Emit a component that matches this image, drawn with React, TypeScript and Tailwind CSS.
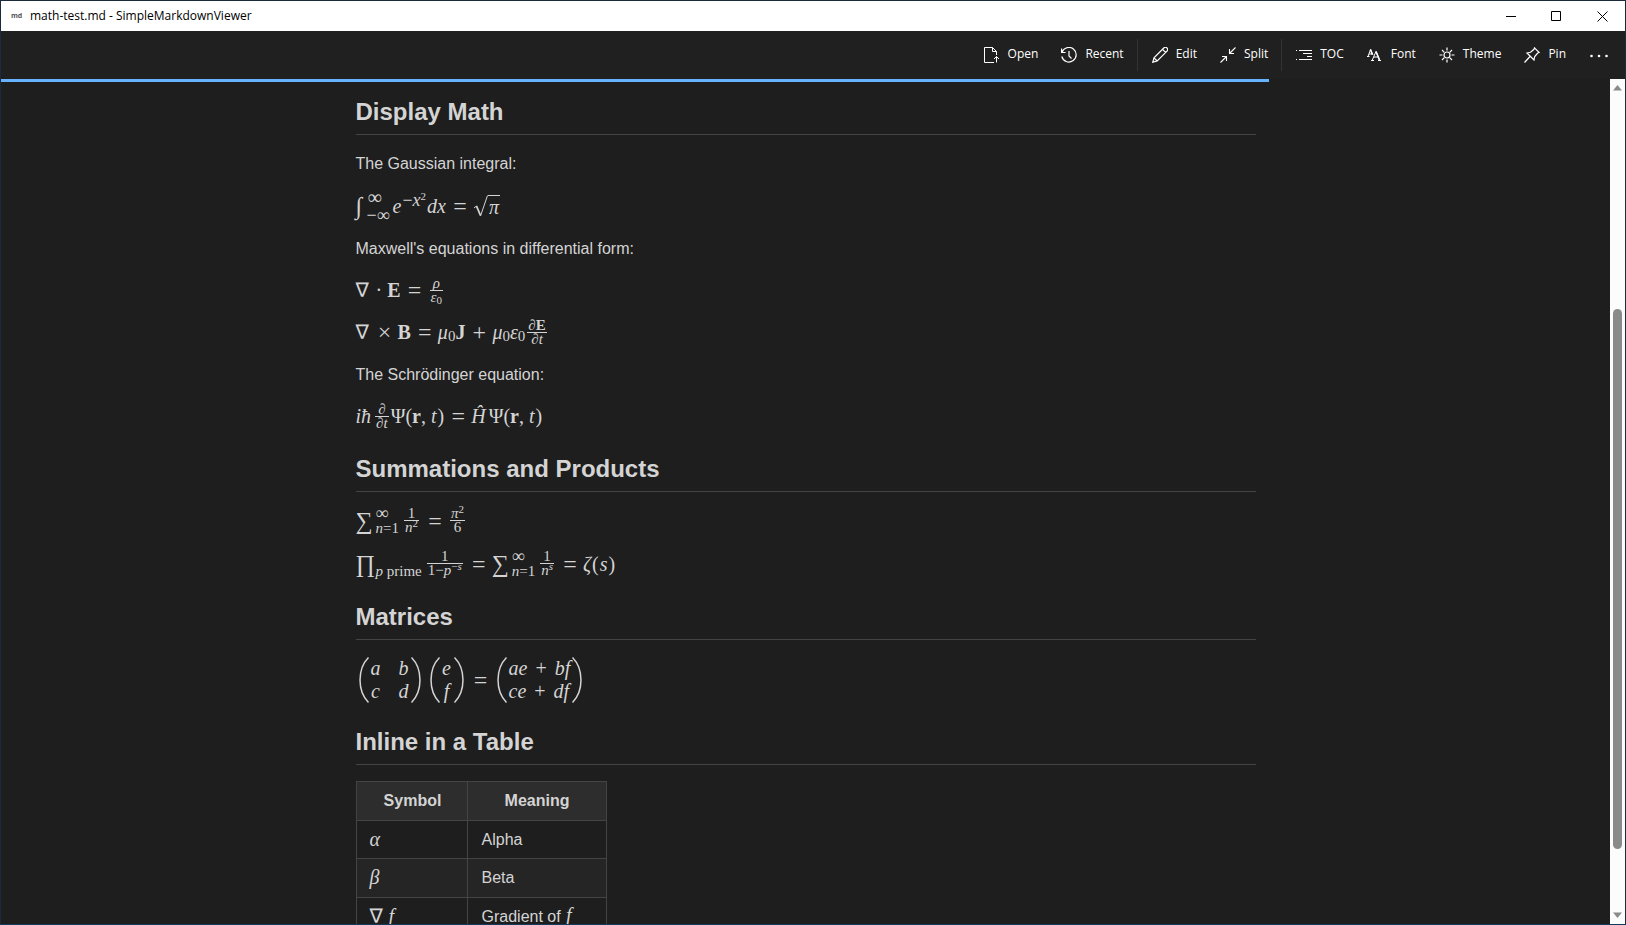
import type { ReactNode } from 'react'

const stroke = { fill: 'none', stroke: 'currentColor', strokeWidth: 1 }

function OpenIcon() {
  return (
    <svg className="size-4" viewBox="0 0 16 16" {...stroke}>
      <path d="M10 15.500H.5V.5h8l4 4V8M8.500.5v4h4M12.500 15.500V9.500M10 12l2.500-2.500L15 12" />
    </svg>
  )
}

function RecentIcon() {
  return (
    <svg className="size-4" viewBox="0 0 16 16" {...stroke} strokeWidth={1.2}>
      <path d="M.6 1.500v4h4M1 5.300A7.300 7.300 0 1 1 .8 9.500M8 4v5l2.500 2.500" />
    </svg>
  )
}

function EditIcon() {
  return (
    <svg className="size-4" viewBox="0 0 16 16" {...stroke} strokeWidth={1.2}>
      <path d="M.8 15.200 2 10.800 11.800 1a2 2 0 0 1 3.200 3.200L5.200 14ZM10.500 2.300l3.200 3.200M2 10.800 5.200 14" />
    </svg>
  )
}

function SplitIcon() {
  return (
    <svg className="size-4" viewBox="0 0 16 16" {...stroke} strokeWidth={1.1}>
      <path d="M15.500.5 9.500 6.500M9.500 2v4.500H14M.5 15.500l6-6M2 9.500h4.500V14" />
    </svg>
  )
}

function TocIcon() {
  return (
    <svg className="size-4" viewBox="0 0 16 16" {...stroke}>
      <path d="M0 3.500h1M3 3.500h13M7 6.500h9M11 9.500h5M0 12.500h1M3 12.500h13" />
    </svg>
  )
}

function FontIcon() {
  return (
    <svg className="size-4" viewBox="0 0 16 16" {...stroke}>
      <path d="M1 9.500 3.500 2.500 6 8M2 7h3M0 9.500h2.500M5.300 13 9 4.500 12.500 13M6.500 10h5M4 13.500h3M11 13.500h3" />
      <path d="m3.500 2.500 1.800 5M9 4.500l3.500 8.500" strokeWidth="1.600" />
    </svg>
  )
}

function ThemeIcon() {
  return (
    <svg className="size-4" viewBox="0 0 16 16" {...stroke} strokeWidth={1.2}>
      <circle cx="8" cy="8" r="3" />
      <path d="M8 .5v3M8 12.500v3M.5 8h3M12.500 8h3M3 3l2.300 2.300M10.700 10.700 13 13M3 13l2.300-2.300M10.700 5.300 13 3" />
    </svg>
  )
}

function PinIcon() {
  return (
    <svg className="size-4" viewBox="0 0 16 16" {...stroke} strokeWidth={1.2}>
      <path d="M10.500.8 15.200 5.500l-1.500.5-3 3.500-.7 3.500L3 6l3.500-.7L10 2.300ZM6 9.500.5 15.500" />
    </svg>
  )
}

const toolGroups = [
  [
    { label: 'Open', icon: <OpenIcon /> },
    { label: 'Recent', icon: <RecentIcon /> }
  ],
  [
    { label: 'Edit', icon: <EditIcon /> },
    { label: 'Split', icon: <SplitIcon /> }
  ],
  [
    { label: 'TOC', icon: <TocIcon /> },
    { label: 'Font', icon: <FontIcon /> },
    { label: 'Theme', icon: <ThemeIcon /> },
    { label: 'Pin', icon: <PinIcon /> }
  ]
]

function TitleBar() {
  return (
    <header className="flex h-[30px] shrink-0 items-center bg-white text-black">
      <span className="w-7 pl-[10px] text-[7px] font-bold text-[#555]">md</span>
      <h1 className="flex-1 pl-px text-xs">math-test.md - SimpleMarkdownViewer</h1>
      <button aria-label="Minimize" className="flex h-full w-[46px] items-center justify-center">
        <svg className="h-[11px] w-[11px]" viewBox="0 0 11 11" {...stroke}>
          <path d="M0 5.500h10" />
        </svg>
      </button>
      <button aria-label="Maximize" className="flex h-full w-[45px] items-center justify-center">
        <svg className="h-[11px] w-[11px]" viewBox="0 0 11 11" {...stroke}>
          <path d="M.5.5h9v9h-9z" />
        </svg>
      </button>
      <button aria-label="Close" className="flex h-full w-[46px] items-center justify-center">
        <svg className="h-[11px] w-[11px]" viewBox="0 0 11 11" {...stroke}>
          <path d="m.5.5 10 10M10.500.5l-10 10" />
        </svg>
      </button>
    </header>
  )
}

function Toolbar() {
  return (
    <nav className="flex h-12 shrink-0 items-center justify-end bg-[#202020] pr-1 text-xs text-white">
      {toolGroups.map((group, index) => (
        <div key={index} className="flex items-center">
          {index > 0 && <div className="mx-[2px] h-8 w-px bg-[#333]" />}
          {group.map((tool) => (
            <button key={tool.label} className="flex h-10 items-center gap-2 pr-[11px] pl-3">
              {tool.icon}
              <span className="pb-[2px]">{tool.label}</span>
            </button>
          ))}
        </div>
      ))}
      <button aria-label="More" className="flex h-10 w-11 items-center justify-center">
        <svg className="h-4 w-5" viewBox="0 0 20 16" fill="currentColor">
          <circle cx="2.500" cy="9" r="1.300" />
          <circle cx="10" cy="9" r="1.300" />
          <circle cx="17.500" cy="9" r="1.300" />
        </svg>
      </button>
    </nav>
  )
}

function Heading({ children }: { children: ReactNode }) {
  return (
    <h2 className="mt-6 mb-4 border-b border-[#444] pb-[7px] text-2xl/[30px] font-bold first:mt-0">
      {children}
    </h2>
  )
}

function Formula({ tall, children }: { tall?: boolean; children: ReactNode }) {
  return (
    <div
      className={`mb-4 flex items-center pb-[2px] font-['Liberation_Serif',serif] text-xl/[26px] whitespace-nowrap ${
        tall ? 'h-[27px]' : 'h-[26px]'
      }`}
    >
      {children}
    </div>
  )
}

// Infix operator or relation
function Op({ children }: { children: ReactNode }) {
  return (
    <span className="mr-[5px] ml-[6px] w-4 text-center text-2xl/[26px]">{children}</span>
  )
}

function Nabla() {
  return <span className="w-[15px] font-['DejaVu_Sans',sans-serif]">∇</span>
}

function Sub({ children }: { children: ReactNode }) {
  return <span className="pt-2 text-[15px]/[18px]">{children}</span>
}

function Frac({ top, bottom }: { top: ReactNode; bottom: ReactNode }) {
  return (
    <span className="mx-[2px] flex flex-col text-center text-[15px]/[13px]">
      <span className="border-b border-current px-px">{top}</span>
      <span className="px-px">{bottom}</span>
    </span>
  )
}

function Sup({ children }: { children: ReactNode }) {
  return <sup className="text-[11px] leading-0">{children}</sup>
}

// Large operator with limits stacked at its side
function BigOp({ sign, upper, lower }: { sign: string; upper?: ReactNode; lower: ReactNode }) {
  return (
    <span className="mr-[3px] flex items-center">
      <span className="w-5 text-2xl/[26px]">{sign}</span>
      <span className="flex flex-col">
        <span className="h-[14px] text-lg/[13px]">{upper}</span>
        <span className="text-[15px]/[14px]">{lower}</span>
      </span>
    </span>
  )
}

function Matrix({ rows }: { rows: ReactNode[][] }) {
  return (
    <span className="flex items-center">
      <svg className="h-[46px] w-[11px]" viewBox="0 0 11 46" {...stroke}>
        <path d="M10.500.5C-.8 12-.8 34 10.500 45.500" strokeWidth="1.500" />
      </svg>
      <span className="flex flex-col px-[2px] leading-[23px] italic">
        {rows.map((row, rowIndex) => (
          <span key={rowIndex} className="flex justify-between gap-[18px]">
            {row.map((cell, cellIndex) => (
              <span key={cellIndex} className="min-w-[10px] text-center">{cell}</span>
            ))}
          </span>
        ))}
      </span>
      <svg className="h-[46px] w-[11px]" viewBox="0 0 11 46" {...stroke}>
        <path d="M.5.5C11.800 12 11.800 34 .5 45.500" strokeWidth="1.500" />
      </svg>
    </span>
  )
}

const plus = <span className="mx-2 not-italic">+</span>

const symbols = [
  { symbol: <i>α</i>, meaning: 'Alpha' },
  { symbol: <i>β</i>, meaning: 'Beta' },
  {
    symbol: <span className="flex gap-1"><Nabla /><i>f</i></span>,
    meaning: <>Gradient of <i className="pl-px font-['Liberation_Serif',serif] text-xl/[24px]">f</i></>
  }
]

function SymbolTable() {
  return (
    <table className="w-[251px] table-fixed border-collapse">
      <thead>
        <tr className="h-[39px] bg-[#2d2d2d]">
          <th className="w-[111px] border border-[#444] pl-[2px]">Symbol</th>
          <th className="border border-[#444] pl-px">Meaning</th>
        </tr>
      </thead>
      <tbody>
        {symbols.map((row, index) => (
          <tr key={index} className="h-[38px] even:h-[39px] even:bg-[#252525]">
            <td className="border border-[#444] px-[13px] pb-[2px] font-['Liberation_Serif',serif] text-xl/[26px]">
              {row.symbol}
            </td>
            <td className="border border-[#444] px-[14px]">{row.meaning}</td>
          </tr>
        ))}
      </tbody>
    </table>
  )
}

function Article() {
  return (
    <article className="mx-auto max-w-[900px] pt-[18px] text-base/[26px] text-[#d4d4d4]">
      <Heading>Display Math</Heading>
      <p className="mb-4">The Gaussian integral:</p>
      <Formula tall>
        <span className="w-[11px] text-2xl/[26px]">∫</span>
        <span className="mr-[3px] flex flex-col leading-[18px]">
          <span className="pl-px">∞</span>
          <span className="text-lg/[18px]">−∞</span>
        </span>
        <i>e</i>
        <span className="px-px pb-3 text-lg/[14px]">−<i>x</i><Sup>2</Sup></span>
        <i>dx</i>
        <Op>=</Op>
        <span className="flex h-[22px]">
          <svg className="h-full w-[15px]" viewBox="0 0 15 22" {...stroke}>
            <path d="m1 13 2.500-2" />
            <path d="m3.500 11 4 9.500" strokeWidth="1.800" />
            <path d="m7.500 21 7-20.500" />
          </svg>
          <i className="border-t border-current px-px leading-[22px]">π</i>
        </span>
      </Formula>
      <p className="mb-4">Maxwell's equations in differential form:</p>
      <Formula>
        <Nabla />
        <span className="mx-[5px]">·</span>
        <b>E</b>
        <Op>=</Op>
        <Frac top={<i>ρ</i>} bottom={<><i>ε</i><sub className="text-[11px] leading-0">0</sub></>} />
      </Formula>
      <Formula>
        <Nabla />
        <Op>×</Op>
        <b>B</b>
        <Op>=</Op>
        <i>μ</i><Sub>0</Sub><b>J</b>
        <Op>+</Op>
        <i>μ</i><Sub>0</Sub><i>ε</i><Sub>0</Sub>
        <Frac top={<>∂<b>E</b></>} bottom={<>∂<i>t</i></>} />
      </Formula>
      <p className="mb-4">The Schrödinger equation:</p>
      <Formula>
        <i className="pr-[2px]">iħ</i>
        <Frac top="∂" bottom={<>∂<i>t</i></>} />
        <span>Ψ(<b>r</b>, <i className="pr-px">t</i>)</span>
        <Op>=</Op>
        <i className="pr-[3px]">Ĥ</i>
        <span>Ψ(<b>r</b>, <i className="pr-px">t</i>)</span>
      </Formula>
      <Heading>Summations and Products</Heading>
      <Formula tall>
        <BigOp sign="∑" upper="∞" lower={<><i>n</i>=1</>} />
        <Frac top="1" bottom={<><i>n</i><Sup>2</Sup></>} />
        <Op>=</Op>
        <Frac top={<><i>π</i><Sup>2</Sup></>} bottom="6" />
      </Formula>
      <Formula tall>
        <BigOp sign="∏" lower={<><i>p</i> prime</>} />
        <Frac top="1" bottom={<>1−<i>p</i><Sup>−<i>s</i></Sup></>} />
        <Op>=</Op>
        <BigOp sign="∑" upper="∞" lower={<><i>n</i>=1</>} />
        <Frac top="1" bottom={<><i>n</i><Sup><i>s</i></Sup></>} />
        <Op>=</Op>
        <span><i className="pr-px">ζ</i>(<i className="px-px">s</i>)</span>
      </Formula>
      <Heading>Matrices</Heading>
      <div className="mb-6 flex h-[47px] items-center gap-[2px] pl-[2px] font-['Liberation_Serif',serif] text-xl">
        <Matrix rows={[['a', 'b'], ['c', 'd']]} />
        <span className="w-[3px]" />
        <Matrix rows={[['e'], ['f']]} />
        <Op>=</Op>
        <Matrix rows={[[<>ae{plus}bf</>], [<>ce{plus}df</>]]} />
      </div>
      <Heading>Inline in a Table</Heading>
      <SymbolTable />
    </article>
  )
}

function Scrollbar() {
  return (
    <aside className="flex w-[15px] shrink-0 flex-col items-center bg-[#fcfcfc] py-[6px] text-[#8a8a8a]">
      <svg className="h-[6px] w-[9px]" viewBox="0 0 9 6" fill="currentColor">
        <path d="M4.500 0 9 5.500H0z" />
      </svg>
      <div className="flex-[218]" />
      <div className="w-[9px] flex-[541] rounded-full bg-[#8a8a8a]" />
      <div className="flex-[63]" />
      <svg className="h-[6px] w-[9px]" viewBox="0 0 9 6" fill="currentColor">
        <path d="M0 .5h9L4.500 6z" />
      </svg>
    </aside>
  )
}

export default function App() {
  return (
    <div className="flex h-screen flex-col overflow-hidden border border-[#1b2a3d] border-b-[#163a5c] bg-[#1e1e1e] font-['Open_Sans',sans-serif]">
      <TitleBar />
      <Toolbar />
      <div className="relative flex min-h-0 flex-1">
        <div className="absolute top-0 left-0 h-[3px] w-[78.1%] bg-[#66b2ff]" />
        <main className="min-w-0 flex-1 overflow-hidden font-['Liberation_Sans',sans-serif]">
          <Article />
        </main>
        <Scrollbar />
      </div>
    </div>
  )
}
